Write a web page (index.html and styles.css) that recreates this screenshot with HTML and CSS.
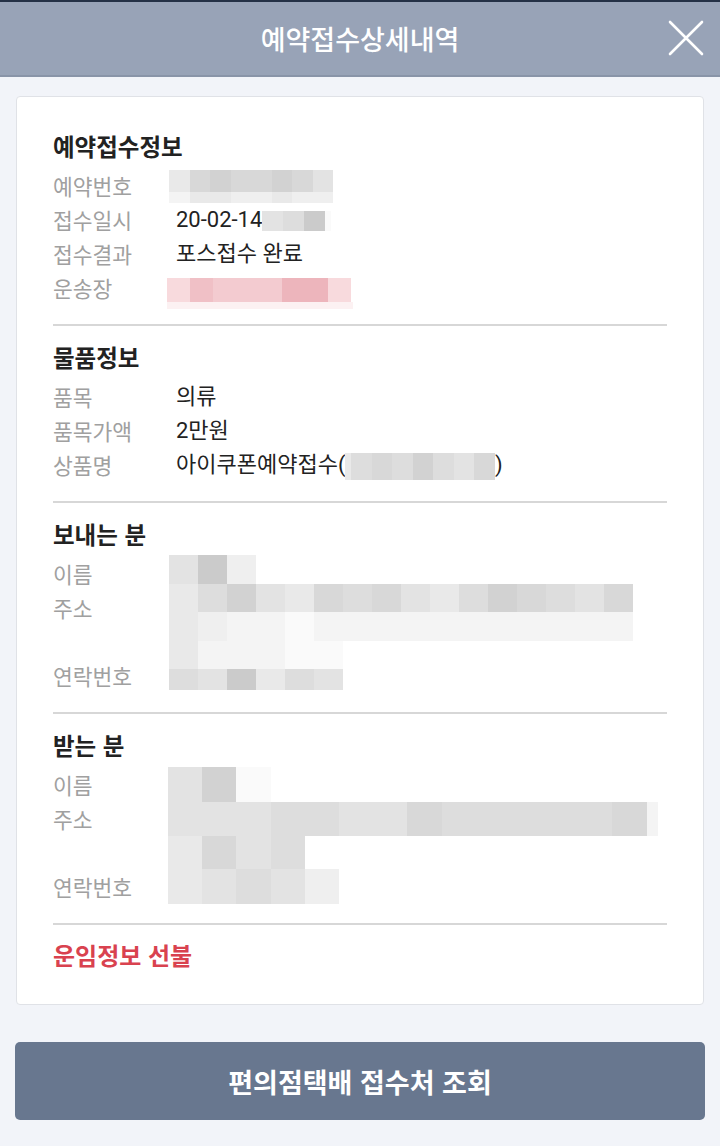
FILE: index.html
```html
<!DOCTYPE html>
<html lang="ko">
<head>
<meta charset="utf-8">
<title>예약접수상세내역</title>
<link rel="stylesheet" href="styles.css">
</head>
<body>
<header class="topbar">
  <h1 class="topbar-title">예약접수상세내역</h1>
  <button class="close-btn" aria-label="닫기">
    <svg width="36" height="36" viewBox="0 0 36 36"><path d="M2 2 L34 34 M34 2 L2 34" stroke="#fff" stroke-width="2.6" stroke-linecap="round" fill="none"/></svg>
  </button>
</header>

<main class="page">
  <section class="card">
    <div class="sec">
      <h2 class="sec-title">예약접수정보</h2>
      <div class="row">
        <span class="lbl">예약번호</span>
        <span class="val">
          <span class="mosaic m-resv">
            <span class="mrow h22"><i class="c4"></i><i class="c7"></i><i class="c8"></i><i class="c7"></i><i class="c7"></i><i class="c8"></i><i class="c7"></i><i class="c5"></i></span>
            <span class="mrow h11"><i class="c2"></i><i class="c4"></i><i class="c4"></i><i class="c3"></i><i class="c3"></i><i class="c4"></i><i class="c3"></i><i class="c3"></i></span>
          </span>
        </span>
      </div>
      <div class="row">
        <span class="lbl">접수일시</span>
        <span class="val">20-02-14<span class="mosaic-inline m-date"><i class="c5"></i><i class="c6"></i><i class="c9"></i><i class="c1 narrow"></i></span></span>
      </div>
      <div class="row">
        <span class="lbl">접수결과</span>
        <span class="val">포스접수 완료</span>
      </div>
      <div class="row">
        <span class="lbl">운송장</span>
        <span class="val">
          <span class="mosaic m-ship">
            <span class="mrow h24"><i class="p1"></i><i class="p3"></i><i class="p2 w2"></i><i class="p2"></i><i class="p4 w2"></i><i class="p1"></i></span>
            <span class="mrow h7 faint-pink"></span>
          </span>
        </span>
      </div>
    </div>

    <div class="sec">
      <h2 class="sec-title">물품정보</h2>
      <div class="row">
        <span class="lbl">품목</span>
        <span class="val">의류</span>
      </div>
      <div class="row">
        <span class="lbl">품목가액</span>
        <span class="val">2만원</span>
      </div>
      <div class="row">
        <span class="lbl">상품명</span>
        <span class="val">아이쿠폰예약접수(<span class="mosaic-inline m-prod"><i class="c4 narrow"></i><i class="c6"></i><i class="c7"></i><i class="c6"></i><i class="c8"></i><i class="c6"></i><i class="c5"></i><i class="c7"></i></span>)</span>
      </div>
    </div>

    <div class="sec">
      <h2 class="sec-title">보내는 분</h2>
      <div class="kv-grid">
        <span class="lbl r1">이름</span>
        <span class="lbl r2">주소</span>
        <span class="lbl r4">연락번호</span>
        <div class="mosaic block m-send">
          <span class="mrow h29"><i class="c5"></i><i class="c9"></i><i class="c3"></i></span>
          <span class="mrow h28"><i class="c4"></i><i class="c6"></i><i class="c8"></i><i class="c5"></i><i class="c4"></i><i class="c7"></i><i class="c6"></i><i class="c7"></i><i class="c5"></i><i class="c4"></i><i class="c6"></i><i class="c8"></i><i class="c7"></i><i class="c6"></i><i class="c5"></i><i class="c7"></i></span>
          <span class="mrow h29"><i class="c4"></i><i class="c3"></i><i class="c2"></i><i class="c2"></i><i class="c1"></i><i class="c2"></i><i class="c2"></i><i class="c2"></i><i class="c2"></i><i class="c2"></i><i class="c2"></i><i class="c2"></i><i class="c2"></i><i class="c2"></i><i class="c2"></i><i class="c2"></i></span>
          <span class="mrow h28"><i class="c4"></i><i class="c2"></i><i class="c2"></i><i class="c2"></i><i class="c1"></i><i class="c1"></i></span>
          <span class="mrow h21"><i class="c6"></i><i class="c5"></i><i class="c9"></i><i class="c4"></i><i class="c6"></i><i class="c5"></i></span>
        </div>
      </div>
    </div>

    <div class="sec">
      <h2 class="sec-title">받는 분</h2>
      <div class="kv-grid">
        <span class="lbl r1">이름</span>
        <span class="lbl r2">주소</span>
        <span class="lbl r4">연락번호</span>
        <div class="mosaic block m-recv">
          <span class="mrow h35"><i class="c5"></i><i class="c8"></i><i class="c1"></i></span>
          <span class="mrow h34"><i class="c5"></i><i class="c5"></i><i class="c5"></i><i class="c6"></i><i class="c6"></i><i class="c5"></i><i class="c5"></i><i class="c7"></i><i class="c6"></i><i class="c6"></i><i class="c6"></i><i class="c6"></i><i class="c6"></i><i class="c7"></i><i class="c2 part"></i></span>
          <span class="mrow h33"><i class="c4"></i><i class="c7"></i><i class="c5"></i><i class="c6"></i></span>
          <span class="mrow h35"><i class="c4"></i><i class="c5"></i><i class="c6"></i><i class="c5"></i><i class="c3"></i></span>
        </div>
      </div>
    </div>

    <div class="sec last">
      <p class="fare">운임정보 선불</p>
    </div>
  </section>

  <button class="cta">편의점택배 접수처 조회</button>
</main>
</body>
</html>
```

FILE: styles.css
```css
* { box-sizing: border-box; }

html, body {
  margin: 0;
  padding: 0;
}

body {
  background: #f2f4f9;
  font-family: "Roboto", "Noto Sans CJK KR", sans-serif;
  color: #222;
  width: 720px;
  min-height: 1146px;
}

.topbar {
  height: 77px;
  background: #98a3b7;
  border-top: 2px solid #253146;
  border-bottom: 2px solid #8994a8;
  display: flex;
  align-items: center;
  justify-content: center;
  position: relative;
}

.topbar-title {
  margin: 0;
  font-family: "Noto Sans CJK KR", sans-serif;
  font-size: 27px;
  font-weight: 500;
  color: #fff;
  line-height: 1;
}

.close-btn {
  position: absolute;
  right: 16px;
  top: 18px;
  width: 36px;
  height: 36px;
  padding: 0;
  border: 0;
  background: none;
  display: flex;
}

.page {
  padding: 19px 16px 26px;
  display: flex;
  flex-direction: column;
}

.card {
  background: #fff;
  border: 1px solid #e0e2e7;
  border-radius: 4px;
  padding: 18px 36px 0 36px;
}

.sec {
  padding: 14px 0 19px;
  border-bottom: 2px solid #d7d7d7;
}

.sec.last {
  border-bottom: 0;
  padding: 13px 0 32px;
}

.sec-title {
  margin: 0 0 6px;
  font-family: "Noto Sans CJK KR", sans-serif;
  font-size: 23.5px;
  font-weight: 700;
  line-height: 34px;
  color: #222;
}

.row {
  display: flex;
  height: 34px;
  align-items: center;
}

.lbl {
  width: 123px;
  flex: none;
  font-family: "Noto Sans CJK KR", sans-serif;
  font-size: 21.5px;
  color: #a0a0a0;
  line-height: 34px;
}

.val {
  font-size: 22px;
  color: #222;
  line-height: 34px;
  display: flex;
  align-items: center;
}

/* mosaic (blurred personal data) */
.mosaic {
  display: flex;
  flex-direction: column;
}

.mrow {
  display: flex;
}

.mosaic i, .mosaic-inline i {
  display: block;
  flex: none;
}

.h7 { height: 7px; }
.h11 { height: 11px; }
.h21 { height: 21px; }
.h22 { height: 22px; }
.h24 { height: 24px; }
.h28 { height: 28px; }
.h29 { height: 29px; }
.h33 { height: 33px; }
.h34 { height: 34px; }
.h35 { height: 35px; }

.m-resv { margin-left: -7px; margin-top: 0; }
.m-resv i { width: 20.5px; }

.mosaic-inline {
  display: inline-flex;
}

.m-date { height: 20px; margin-top: 1px; }
.m-date i { width: 21px; }
.m-date i.narrow { width: 6px; }

.m-ship { margin-left: -9px; margin-top: 10px; }
.m-ship i { width: 23px; }
.m-ship i.w2 { width: 46px; }
.faint-pink { width: 186px; background: #fcf1f2; }

.m-prod { height: 27px; margin-top: 2px; }
.m-prod i { width: 20.5px; }
.m-prod i.narrow { width: 6px; }

.kv-grid {
  display: grid;
  grid-template-columns: 123px 1fr;
  grid-template-rows: repeat(4, 34px);
}

.r1 { grid-row: 1; grid-column: 1; }
.r2 { grid-row: 2; grid-column: 1; }
.r4 { grid-row: 4; grid-column: 1; }

.mosaic.block {
  grid-column: 2;
  grid-row: 1 / 5;
  align-self: start;
}

.m-send { margin-left: -7px; margin-top: -2px; }
.m-send i { width: 29px; }

.m-recv { margin-left: -8px; margin-top: -1px; }
.m-recv i { width: 34.2px; }
.m-recv i.part { width: 11px; }

.c1 { background: #fafafa; }
.c2 { background: #f4f4f4; }
.c3 { background: #efefef; }
.c4 { background: #e9e9e9; }
.c5 { background: #e3e3e3; }
.c6 { background: #dddddd; }
.c7 { background: #d8d8d8; }
.c8 { background: #d2d2d2; }
.c9 { background: #cbcbcb; }

.p1 { background: #f8dadd; }
.p2 { background: #f3cbd0; }
.p3 { background: #f0c0c6; }
.p4 { background: #edb5bc; }

.fare {
  margin: 0;
  font-family: "Noto Sans CJK KR", sans-serif;
  font-size: 24px;
  font-weight: 700;
  line-height: 34px;
  color: #d9424f;
}

.cta {
  margin: 37px -1px 0;
  height: 78px;
  border: 0;
  border-radius: 5px;
  background: #68778f;
  color: #fff;
  font-family: "Noto Sans CJK KR", sans-serif;
  font-size: 27px;
  font-weight: 700;
}
```
